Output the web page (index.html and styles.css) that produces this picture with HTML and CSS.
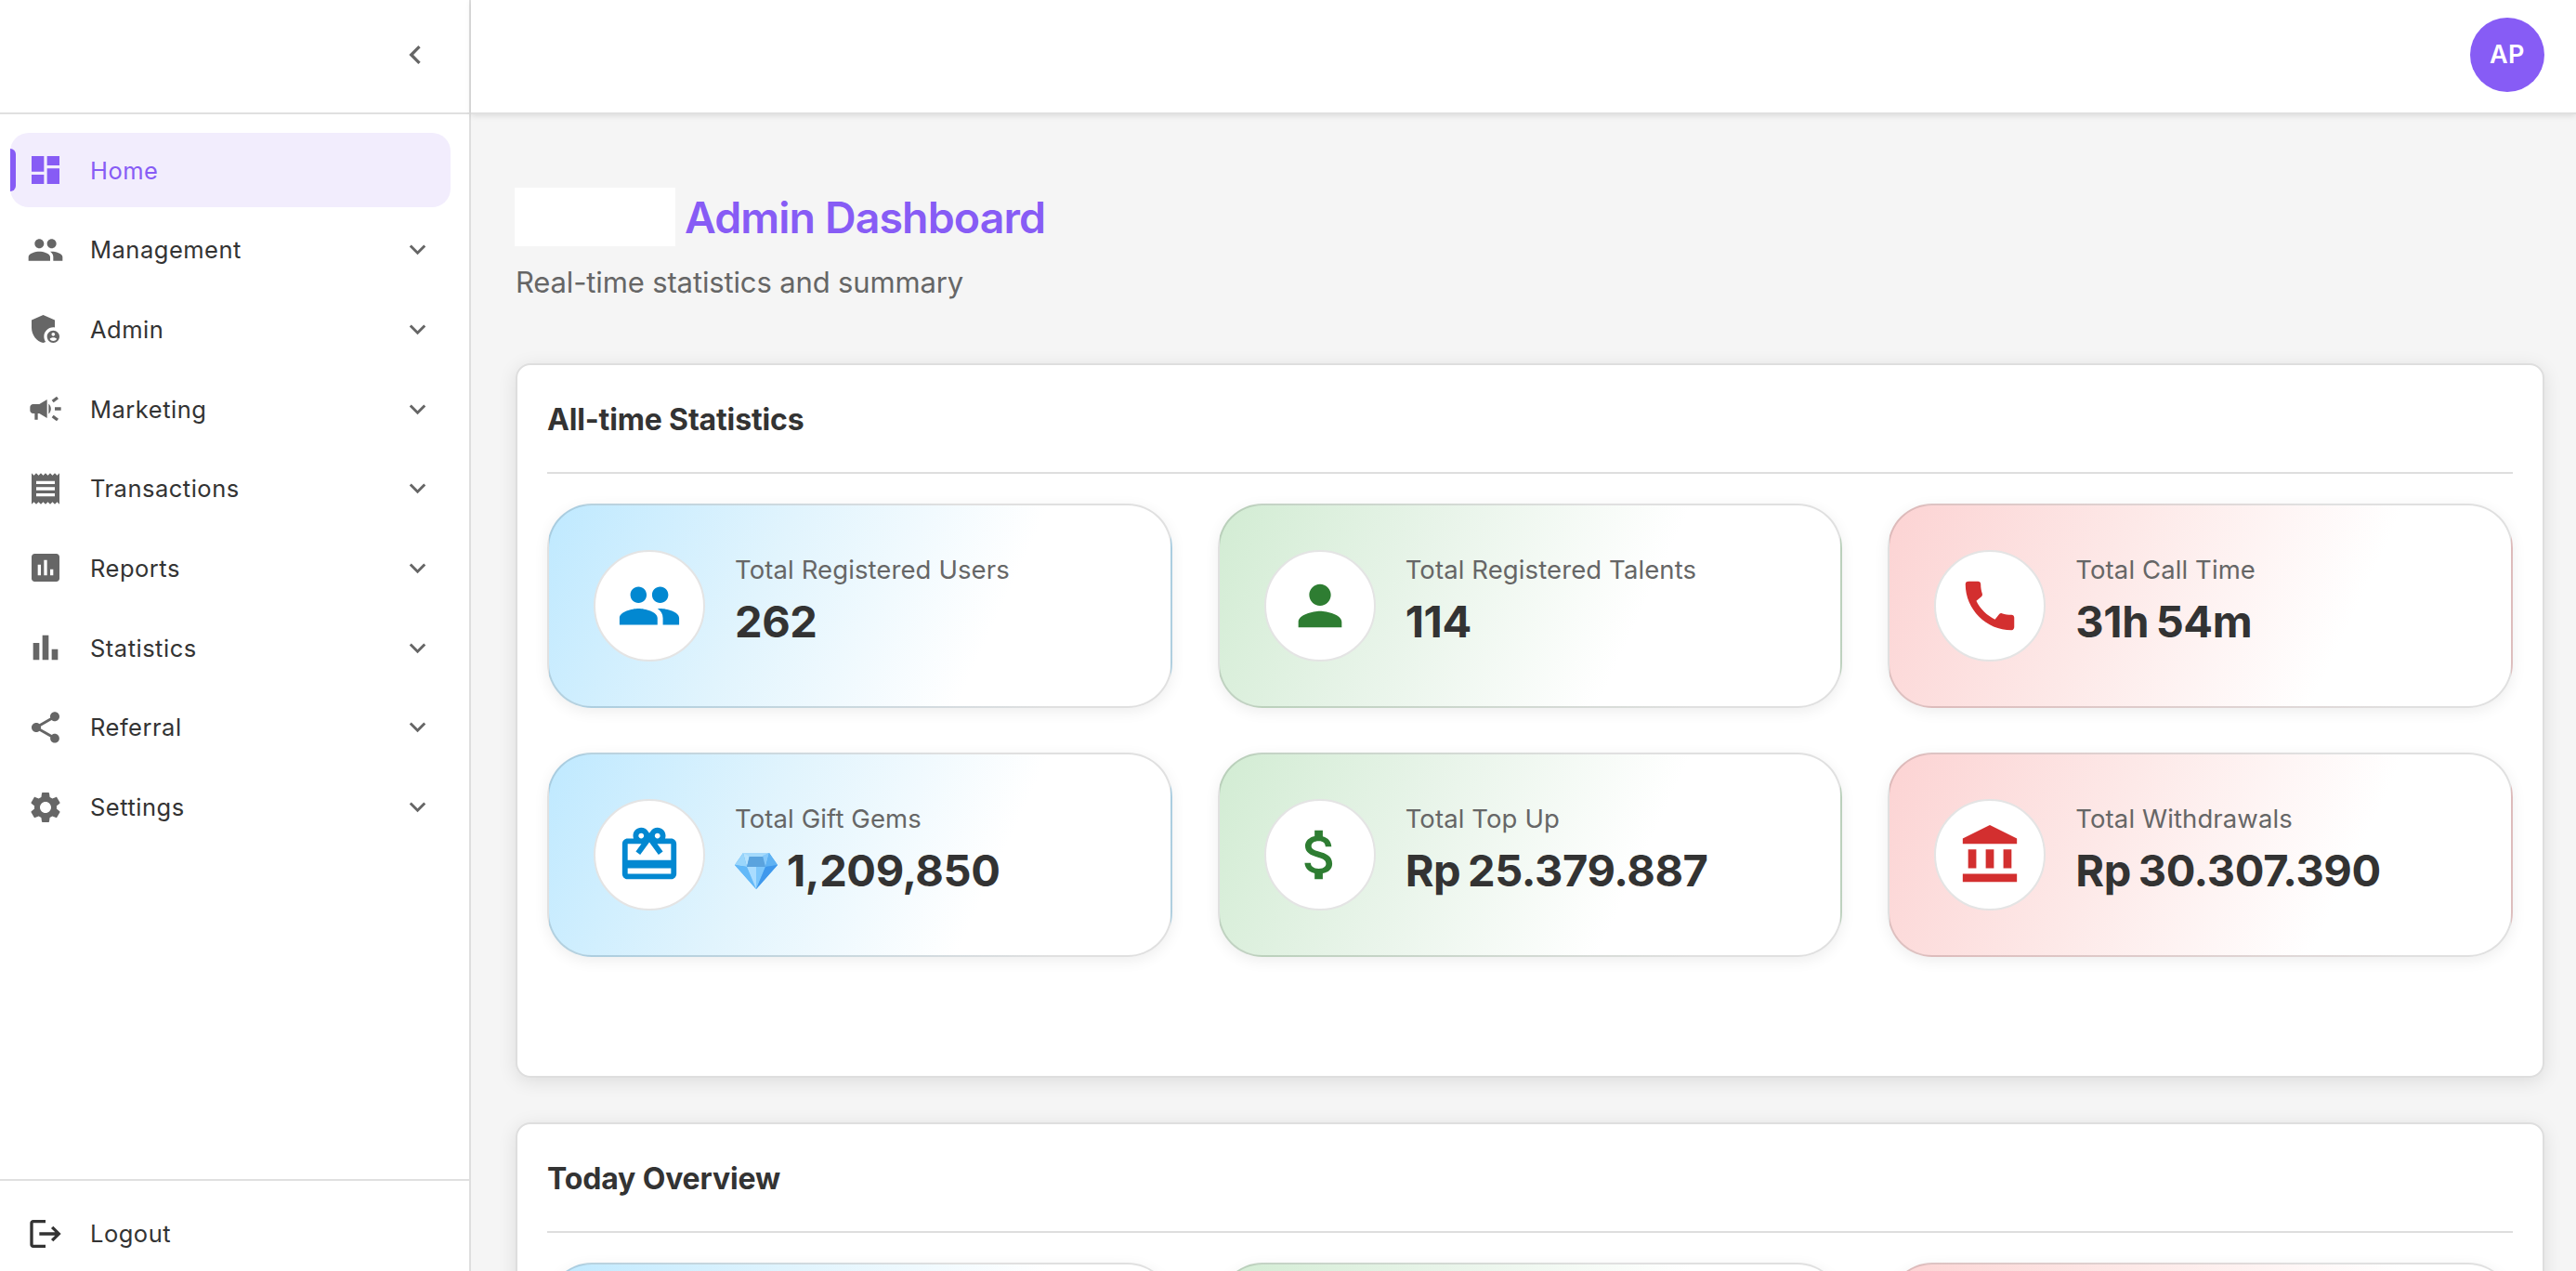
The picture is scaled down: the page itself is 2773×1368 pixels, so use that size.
FILE: index.html
```html
<!DOCTYPE html>
<html lang="en">
<head>
    <meta charset="UTF-8">
    <meta name="viewport" content="width=device-width, initial-scale=1.0">
    <title>Admin Dashboard</title>
    <link rel="stylesheet" href="styles.css">
</head>
<body>
    <!-- shared icon shapes -->
    <svg class="sprite">
        <symbol id="chevron" viewBox="0 0 24 24"><path d="M16.59 8.59 12 13.17 7.41 8.59 6 10l6 6 6-6z"/></symbol>
        <symbol id="people" viewBox="0 0 24 24"><path d="M16 11c1.66 0 2.99-1.34 2.99-3S17.66 5 16 5c-1.66 0-3 1.34-3 3s1.34 3 3 3m-8 0c1.66 0 2.99-1.34 2.99-3S9.66 5 8 5C6.34 5 5 6.34 5 8s1.34 3 3 3m0 2c-2.33 0-7 1.17-7 3.5V19h14v-2.5c0-2.33-4.67-3.5-7-3.5m8 0c-.29 0-.62.02-.97.05 1.16.84 1.97 1.97 1.97 3.45V19h6v-2.5c0-2.33-4.67-3.5-7-3.5"/></symbol>
    </svg>

    <div class="layout">
        <aside class="sidebar">
            <div class="sidebar-header">
                <svg class="icon" viewBox="0 0 24 24"><path d="M15.41 7.41 14 6l-6 6 6 6 1.41-1.41L10.83 12z"/></svg>
            </div>
            <nav class="menu">
                <a class="menu-item active" href="#">
                    <svg class="icon" viewBox="0 0 24 24"><path d="M3 13h8V3H3zm0 8h8v-6H3zm10 0h8V11h-8zm0-18v6h8V3z"/></svg>
                    <span>Home</span>
                </a>
                <a class="menu-item" href="#">
                    <svg class="icon"><use href="#people"/></svg>
                    <span>Management</span>
                    <svg class="chevron"><use href="#chevron"/></svg>
                </a>
                <a class="menu-item" href="#">
                    <svg class="icon" viewBox="0 0 24 24"><path d="M17 11c.34 0 .67.04 1 .09V6.27L10.5 3 3 6.27v4.91c0 4.54 3.2 8.79 7.5 9.82.55-.13 1.08-.32 1.6-.55-.69-.98-1.1-2.17-1.1-3.45 0-3.31 2.69-6 6-6"/><path d="M17 13c-2.21 0-4 1.79-4 4s1.79 4 4 4 4-1.79 4-4-1.79-4-4-4m0 1.38c.62 0 1.12.51 1.12 1.12s-.51 1.12-1.12 1.12-1.12-.51-1.12-1.12.5-1.12 1.12-1.12m0 5.37c-.93 0-1.74-.46-2.24-1.17.05-.72 1.51-1.08 2.24-1.08s2.19.36 2.24 1.08c-.5.71-1.31 1.17-2.24 1.17"/></svg>
                    <span>Admin</span>
                    <svg class="chevron"><use href="#chevron"/></svg>
                </a>
                <a class="menu-item" href="#">
                    <svg class="icon" viewBox="0 0 24 24"><path d="M18 11v2h4v-2zm-2 6.61c.96.71 2.21 1.65 3.2 2.39.4-.53.8-1.07 1.2-1.6-.99-.74-2.24-1.68-3.2-2.4-.4.54-.8 1.08-1.2 1.61M20.4 5.6c-.4-.53-.8-1.07-1.2-1.6-.99.74-2.24 1.68-3.2 2.4.4.53.8 1.07 1.2 1.6.96-.72 2.21-1.65 3.2-2.4M4 9c-1.1 0-2 .9-2 2v2c0 1.1.9 2 2 2h1v4h2v-4h1l5 3V6L8 9zm11.5 3c0-1.33-.58-2.53-1.5-3.35v6.69c.92-.81 1.5-2.01 1.5-3.34"/></svg>
                    <span>Marketing</span>
                    <svg class="chevron"><use href="#chevron"/></svg>
                </a>
                <a class="menu-item" href="#">
                    <svg class="icon" viewBox="0 0 24 24"><path d="M18 17H6v-2h12zm0-4H6v-2h12zm0-4H6V7h12zM3 22l1.5-1.5L6 22l1.5-1.5L9 22l1.5-1.5L12 22l1.5-1.5L15 22l1.5-1.5L18 22l1.5-1.5L21 22V2l-1.5 1.5L18 2l-1.5 1.5L15 2l-1.5 1.5L12 2l-1.5 1.5L9 2 7.5 3.5 6 2 4.5 3.5 3 2z"/></svg>
                    <span>Transactions</span>
                    <svg class="chevron"><use href="#chevron"/></svg>
                </a>
                <a class="menu-item" href="#">
                    <svg class="icon" viewBox="0 0 24 24"><path d="M19 3H5c-1.1 0-2 .9-2 2v14c0 1.1.9 2 2 2h14c1.1 0 2-.9 2-2V5c0-1.1-.9-2-2-2M9 17H7v-7h2zm4 0h-2V7h2zm4 0h-2v-4h2z"/></svg>
                    <span>Reports</span>
                    <svg class="chevron"><use href="#chevron"/></svg>
                </a>
                <a class="menu-item" href="#">
                    <svg class="icon" viewBox="0 0 24 24"><path d="M4 9h4v11H4zm12 4h4v7h-4zm-6-9h4v16h-4z"/></svg>
                    <span>Statistics</span>
                    <svg class="chevron"><use href="#chevron"/></svg>
                </a>
                <a class="menu-item" href="#">
                    <svg class="icon" viewBox="0 0 24 24"><path d="M18 16.08c-.76 0-1.44.3-1.96.77L8.91 12.7c.05-.23.09-.46.09-.7s-.04-.47-.09-.7l7.05-4.11c.54.5 1.25.81 2.04.81 1.66 0 3-1.34 3-3s-1.34-3-3-3-3 1.34-3 3c0 .24.04.47.09.7L8.04 9.81C7.5 9.31 6.79 9 6 9c-1.66 0-3 1.34-3 3s1.34 3 3 3c.79 0 1.5-.31 2.04-.81l7.12 4.16c-.05.21-.08.43-.08.65 0 1.61 1.31 2.92 2.92 2.92s2.92-1.31 2.92-2.92-1.31-2.92-2.92-2.92"/></svg>
                    <span>Referral</span>
                    <svg class="chevron"><use href="#chevron"/></svg>
                </a>
                <a class="menu-item" href="#">
                    <svg class="icon" viewBox="0 0 24 24"><path d="M19.14 12.94c.04-.3.06-.61.06-.94 0-.32-.02-.64-.07-.94l2.03-1.58c.18-.14.23-.41.12-.61l-1.92-3.32c-.12-.22-.37-.29-.59-.22l-2.39.96c-.5-.38-1.03-.7-1.62-.94l-.36-2.54c-.04-.24-.24-.41-.48-.41h-3.84c-.24 0-.43.17-.47.41l-.36 2.54c-.59.24-1.13.57-1.62.94l-2.39-.96c-.22-.08-.47 0-.59.22L2.74 8.87c-.12.21-.08.47.12.61l2.03 1.58c-.05.3-.09.63-.09.94s.02.64.07.94l-2.03 1.58c-.18.14-.23.41-.12.61l1.92 3.32c.12.22.37.29.59.22l2.39-.96c.5.38 1.03.7 1.62.94l.36 2.54c.05.24.24.41.48.41h3.84c.24 0 .44-.17.47-.41l.36-2.54c.59-.24 1.13-.56 1.62-.94l2.39.96c.22.08.47 0 .59-.22l1.92-3.32c.12-.22.07-.47-.12-.61zM12 15.6c-1.98 0-3.6-1.62-3.6-3.6s1.62-3.6 3.6-3.6 3.6 1.62 3.6 3.6-1.62 3.6-3.6 3.6"/></svg>
                    <span>Settings</span>
                    <svg class="chevron"><use href="#chevron"/></svg>
                </a>
            </nav>
            <a class="logout" href="#">
                <svg class="icon" viewBox="0 0 24 24"><path d="m17 7-1.41 1.41L18.17 11H8v2h10.17l-2.58 2.58L17 17l5-5zM4 5h8V3H4c-1.1 0-2 .9-2 2v14c0 1.1.9 2 2 2h8v-2H4z"/></svg>
                <span>Logout</span>
            </a>
        </aside>

        <div class="main">
            <header class="topbar">
                <div class="avatar">AP</div>
            </header>
            <main class="content">
                <div class="page-title">
                    <div class="brand"></div>
                    <h1>Admin Dashboard</h1>
                </div>
                <p class="subtitle">Real-time statistics and summary</p>

                <section class="panel">
                    <h2>All-time Statistics</h2>
                    <div class="stats">
                        <div class="stat blue">
                            <div class="stat-icon"><svg><use href="#people"/></svg></div>
                            <div class="stat-text">
                                <div class="label">Total Registered Users</div>
                                <div class="value">262</div>
                            </div>
                        </div>
                        <div class="stat green">
                            <div class="stat-icon"><svg viewBox="0 0 24 24"><path d="M12 12c2.21 0 4-1.79 4-4s-1.79-4-4-4-4 1.79-4 4 1.79 4 4 4m0 2c-2.67 0-8 1.34-8 4v2h16v-2c0-2.66-5.33-4-8-4"/></svg></div>
                            <div class="stat-text">
                                <div class="label">Total Registered Talents</div>
                                <div class="value">114</div>
                            </div>
                        </div>
                        <div class="stat red">
                            <div class="stat-icon"><svg viewBox="0 0 24 24"><path d="M20.01 15.38c-1.23 0-2.42-.2-3.53-.56-.35-.12-.74-.03-1.01.24l-1.57 1.97c-2.83-1.35-5.48-3.9-6.89-6.83l1.95-1.66c.27-.28.35-.67.24-1.02-.37-1.11-.56-2.3-.56-3.53 0-.54-.45-.99-.99-.99H4.19C3.65 3 3 3.24 3 3.99 3 13.28 10.73 21 20.01 21c.71 0 .99-.63.99-1.18v-3.45c0-.54-.45-.99-.99-.99"/></svg></div>
                            <div class="stat-text">
                                <div class="label">Total Call Time</div>
                                <div class="value">31h 54m</div>
                            </div>
                        </div>
                        <div class="stat blue">
                            <div class="stat-icon"><svg viewBox="0 0 24 24"><path d="M20 6h-2.18c.11-.31.18-.65.18-1 0-1.66-1.34-3-3-3-1.05 0-1.96.54-2.5 1.35l-.5.67-.5-.68C10.96 2.54 10.05 2 9 2 7.34 2 6 3.34 6 5c0 .35.07.69.18 1H4c-1.11 0-1.99.89-1.99 2L2 19c0 1.11.89 2 2 2h16c1.11 0 2-.89 2-2V8c0-1.11-.89-2-2-2m-5-2c.55 0 1 .45 1 1s-.45 1-1 1-1-.45-1-1 .45-1 1-1M9 4c.55 0 1 .45 1 1s-.45 1-1 1-1-.45-1-1 .45-1 1-1m11 15H4v-2h16zm0-5H4V8h5.08L7 10.83 8.62 12 11 8.76l1-1.36 1 1.36L15.38 12 17 10.83 14.92 8H20z"/></svg></div>
                            <div class="stat-text">
                                <div class="label">Total Gift Gems</div>
                                <div class="value">
                                    <svg class="gem" viewBox="0 0 46 40">
                                        <path fill="#4aa8f4" d="M9 1h28l9 13-23 26L0 14z"/>
                                        <path fill="#9ad6fb" d="M9 1 0 14l13 2z"/>
                                        <path fill="#b5e2fd" d="M9 1h8l-4 15z"/>
                                        <path fill="#5aa3de" d="M16 3h14l3 13H13z"/>
                                        <path fill="#a5dafc" d="M9 1h28l-7 4H16z"/>
                                        <path fill="#86c9fa" d="M30 4l7-3-4 15z"/>
                                        <path fill="#5fb2f3" d="m37 1 9 13-13 2z"/>
                                        <path fill="#63b9f8" d="m0 14 13 2 10 24z"/>
                                        <path fill="#a9dcff" d="M13 16h10v24z"/>
                                        <path fill="#7cc6fb" d="M23 16h10L23 40z"/>
                                        <path fill="#3f98ec" d="m33 16 13-2-23 26z"/>
                                    </svg>
                                    <span>1,209,850</span>
                                </div>
                            </div>
                        </div>
                        <div class="stat green">
                            <div class="stat-icon"><svg viewBox="0 0 24 24"><path d="M11.8 10.9c-2.27-.59-3-1.2-3-2.15 0-1.09 1.01-1.85 2.7-1.85 1.78 0 2.44.85 2.5 2.1h2.21c-.07-1.72-1.12-3.3-3.21-3.81V3h-3v2.16c-1.94.42-3.5 1.68-3.5 3.61 0 2.31 1.91 3.46 4.7 4.13 2.5.6 3 1.48 3 2.41 0 .69-.49 1.79-2.7 1.79-2.06 0-2.87-.92-2.98-2.1h-2.2c.12 2.19 1.76 3.42 3.68 3.83V21h3v-2.15c1.95-.37 3.5-1.5 3.5-3.55 0-2.84-2.43-3.81-4.7-4.4"/></svg></div>
                            <div class="stat-text">
                                <div class="label">Total Top Up</div>
                                <div class="value">Rp 25.379.887</div>
                            </div>
                        </div>
                        <div class="stat red">
                            <div class="stat-icon"><svg viewBox="0 0 24 24"><path d="M4 10h3v7H4zm6.5 0h3v7h-3zM2 19h20v3H2zm15-9h3v7h-3zm-5-9L2 6v2h20V6z"/></svg></div>
                            <div class="stat-text">
                                <div class="label">Total Withdrawals</div>
                                <div class="value">Rp 30.307.390</div>
                            </div>
                        </div>
                    </div>
                </section>

                <section class="panel">
                    <h2>Today Overview</h2>
                    <div class="stats">
                        <div class="stat blue"></div>
                        <div class="stat green"></div>
                        <div class="stat red"></div>
                    </div>
                </section>
            </main>
        </div>
    </div>
</body>
</html>
```
FILE: styles.css
```css
* {
    box-sizing: border-box;
}
body {
    margin: 0;
    background-color: #f5f5f5;
    color: #333;
    font-family: Inter, "Liberation Sans", sans-serif;
}
a {
    color: inherit;
    text-decoration: none;
}
svg {
    fill: currentColor;
    flex-shrink: 0;
}
.sprite {
    display: none;
}
.layout {
    display: flex;
    height: 100vh;
    overflow: hidden;
}

/* Sidebar */
.sidebar {
    display: flex;
    flex-direction: column;
    width: 507px;
    flex-shrink: 0;
    background-color: #fff;
    border-right: 2px solid #dedede;
}
.sidebar-header {
    display: flex;
    align-items: center;
    justify-content: flex-end;
    height: 123px;
    padding: 0 38px 4px 0;
    border-bottom: 2px solid #e0e0e0;
    color: #666;
}
.icon {
    width: 40px;
    height: 40px;
}
.menu {
    display: flex;
    flex-direction: column;
    flex: 1;
    gap: 5.7px;
    padding: 20px 20px 0 11px;
}
.menu-item {
    display: flex;
    align-items: center;
    height: 80px;
    padding: 0 18px;
    border-radius: 20px;
    font-size: 25.5px;
    font-weight: 430;
    letter-spacing: 0.5px;
}
.menu-item .icon {
    color: #666;
}
.menu-item span, .logout span {
    flex: 1;
    margin-left: 28px;
}
.chevron {
    width: 35px;
    height: 35px;
    color: #666;
}
.menu-item.active, .menu-item.active .icon {
    color: #875cf5;
}
.menu-item.active {
    position: relative;
    background-color: #f2edfd;
}
.menu-item.active::before {
    content: "";
    position: absolute;
    left: 0;
    top: 17px;
    width: 6px;
    height: 46px;
    border-radius: 0 6px 6px 0;
    background-color: #875cf5;
}
.logout {
    display: flex;
    align-items: center;
    height: 99px;
    padding: 16px 29px 0;
    border-top: 2px solid #e0e0e0;
    font-size: 25.5px;
    font-weight: 430;
    letter-spacing: 0.5px;
}

/* Top bar */
.main {
    flex: 1;
    min-width: 0;
}
.topbar {
    display: flex;
    align-items: center;
    justify-content: flex-end;
    height: 123px;
    padding: 0 34px 4px;
    background-color: #fff;
    border-bottom: 2px solid #e0e0e0;
    box-shadow: 0 2px 6px rgba(0, 0, 0, 0.1);
}
.avatar {
    width: 80px;
    height: 80px;
    border-radius: 50%;
    background-color: #875cf5;
    color: #fff;
    font-size: 27px;
    font-weight: 600;
    line-height: 80px;
    text-align: center;
    letter-spacing: 0.5px;
}

/* Content */
.content {
    padding: 78px 34px 0 48px;
}
.page-title {
    display: flex;
    align-items: center;
    gap: 10px;
    height: 65px;
}
.brand {
    width: 173px;
    height: 63px;
    margin-left: -1px;
    background-color: #fff;
}
h1 {
    margin: 0;
    color: #875cf5;
    font-size: 46.5px;
    font-weight: 600;
    letter-spacing: -0.9px;
}
.subtitle {
    height: 40px;
    margin: 18px 0 67px;
    color: #666;
    font-size: 31px;
    line-height: 40px;
    letter-spacing: -0.14px;
}
.panel {
    height: 769px;
    margin-bottom: 48px;
    padding: 0 32px;
    background-color: #fff;
    border: 2px solid #dedede;
    border-radius: 16px;
    box-shadow: 0 4px 20px rgba(0, 0, 0, 0.1);
}
h2 {
    height: 117px;
    margin: 0 0 32px;
    border-bottom: 2px solid #dedede;
    font-size: 32px;
    font-weight: 650;
    line-height: 117px;
    letter-spacing: -0.15px;
}
.stats {
    display: grid;
    grid-template-columns: repeat(3, 1fr);
    grid-auto-rows: 220px;
    gap: 48px 49px;
}
.stat {
    display: flex;
    align-items: center;
    padding-left: 48px;
    border: 2px solid rgba(0, 0, 0, 0.12);
    border-radius: 48px;
    box-shadow: 0 4px 16px rgba(0, 0, 0, 0.07);
}
.stat.blue {
    background-image: linear-gradient(115deg, #bfe9ff 0%, #e1f4fd 35%, #fff 70%);
}
.stat.green {
    background-image: linear-gradient(115deg, #d2ecd3 0%, #e8f4e9 32%, #fff 66%);
}
.stat.red {
    background-image: linear-gradient(115deg, #fcd3d3 0%, #fde9e8 36%, #fff 72%);
}
.stat-icon {
    display: flex;
    align-items: center;
    justify-content: center;
    width: 120px;
    height: 120px;
    margin-right: 32px;
    border: 2px solid #e4e4e4;
    border-radius: 50%;
    background-color: #fff;
}
.stat-icon svg {
    width: 70px;
    height: 70px;
}
.blue .stat-icon {
    color: #0288d1;
}
.green .stat-icon {
    color: #2e7d32;
}
.red .stat-icon {
    color: #d32f2f;
}
.stat-text {
    padding-bottom: 13px;
}
.label {
    margin-bottom: 6px;
    color: #666;
    font-size: 27.5px;
    font-weight: 430;
    line-height: 40px;
    letter-spacing: 0.1px;
}
.value {
    display: flex;
    align-items: center;
    gap: 10px;
    font-size: 47px;
    font-weight: 740;
    line-height: 60px;
    letter-spacing: -0.4px;
    word-spacing: -3px;
    white-space: pre;
}
.gem {
    width: 46px;
    height: 40px;
}
```
